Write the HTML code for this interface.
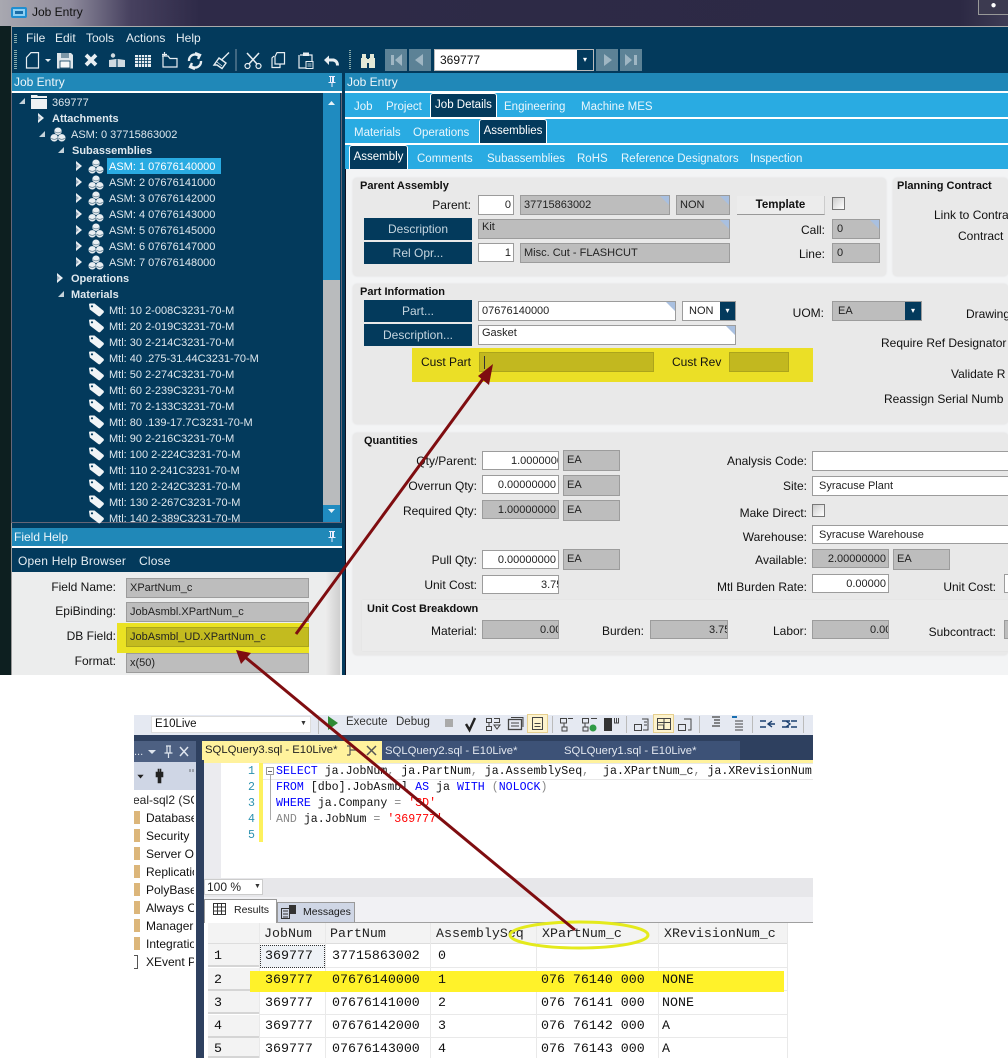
<!DOCTYPE html>
<html><head><meta charset="utf-8"><title>Job Entry</title>
<style>
html,body{margin:0;padding:0;background:#fff}
#p{position:relative;width:1008px;height:1058px;overflow:hidden;background:#fff;font:12px/14px "Liberation Sans",sans-serif;color:#111}
#p div,#p span.a{position:absolute;white-space:nowrap}
.bx{box-sizing:border-box}
.nv{background:#033a5c}
.t{color:#e6eef3}
.tr{font-size:11px;color:#dfe8ee;line-height:14px;margin-top:1px}
.b{font-weight:bold}
.h{background:#2088b8;color:#eef6fa;height:18px;line-height:18px;padding-left:2px;box-sizing:border-box}
.tb{background:#29abe2;height:24px}
.tl{color:#e9f6fc;line-height:14px;font-size:11.5px}
.act{background:#033a5c;border:1px solid #fff;border-bottom:0;border-radius:3px 3px 0 0;box-sizing:border-box;color:#fff;text-align:center;line-height:22px;height:24px;font-size:11.5px}
.g{background:#e9e9e9;border-radius:4px;box-shadow:0 0 2px #ddd}
.gt{font-weight:bold;font-size:11px;color:#111;margin-top:1px}
.f{box-sizing:border-box;height:20px;border:1px solid #9c9c9c;background:#bdbdbd;font-size:11px;line-height:19px;padding:0 3px;overflow:hidden;color:#222}
.w{background:#fff}
.n{text-align:right;padding-right:2px}
.c::after{content:"";position:absolute;right:0;top:0;border-top:9px solid #a9c0e0;border-left:9px solid transparent}
.btn{box-sizing:border-box;width:108px;height:22px;background:#033a5c;color:#c5d5df;text-align:center;line-height:23px;left:364px}
.l{text-align:right;color:#111}
.dd{background:#033a5c;color:#fff;font-size:8px;text-align:center;line-height:18px}
.ck{box-sizing:border-box;width:13px;height:13px;border:1px solid #777;background:linear-gradient(135deg,#ccc,#fff)}
.cd{font:11.6px/16px "Liberation Mono",monospace;color:#111}
.m{font:13.3px/16px "Liberation Mono",monospace;color:#111}
.k{color:#00f}.s{color:#f00}.y{color:#888}
.ln{font:11.6px/16px "Liberation Mono",monospace;color:#2b91af}
.st{font-size:10.5px;color:#1a1a1a;line-height:14px}
.rh{background:#f3f3f3;border-bottom:2px solid #d5d5d5;box-sizing:border-box;left:208px;width:51px;height:23px}
.vl{background:#e9e9e9;width:1px;top:923px;height:135px}
.hl{background:#e9e9e9;height:1px;left:259px;width:528px}
.nb{background:#5c8296;width:22px;height:22px;top:49px}
.q{font-size:11.3px}
svg{position:absolute;overflow:visible}
</style></head><body>
<div id="p">
<svg width="0" height="0"><defs>
<symbol id="asm" viewBox="0 0 16 16"><g fill="#e8eef2" stroke="#033a5c" stroke-width=".5"><circle cx="8" cy="4.500" r="4.200"/><circle cx="4" cy="11.500" r="4.200"/><circle cx="12" cy="11.500" r="4.200"/></g><g fill="none" stroke="#6f8a9b" stroke-width=".9"><path d="M4.500 5Q8 7.500 11.500 5M.8 12Q4 14.500 7.200 12M8.800 12Q12 14.500 15.200 12"/></g></symbol>
<symbol id="tag" viewBox="0 0 18 14"><path d="M1 1.500Q1 .5 2 .5H6.500L15.500 7.800Q16.300 8.800 15.500 9.800L12.300 13Q11.300 13.800 10.300 13L1.800 6.500Z" fill="#f0f4f6"/><circle cx="4" cy="3.300" r="1.100" fill="#033a5c"/></symbol>
<symbol id="ra" viewBox="0 0 8 10"><path d="M1 0 7 5 1 10Z" fill="#e8eef2"/><path d="M1 2.500V7.500L4 5Z" fill="#9ab"/></symbol>
<symbol id="da" viewBox="0 0 8 8"><path d="M7 1V7H1Z" fill="#c5d2da"/></symbol>
</defs></svg>

<!-- window chrome -->
<div style="left:0;top:0;width:1008px;height:26px;background:linear-gradient(90deg,#a8a8b0 0,#8d8a9c 70px,#47415f 130px,#2e2a48 200px,#2c2944 960px,#3e3c55 1008px)"></div>
<div style="left:0;top:26px;width:11px;height:649px;background:#0d1f20"></div>
<svg style="left:11px;top:7px" width="16" height="11"><rect width="16" height="11" rx="2" fill="#1f8ed0"/><rect x="2" y="2" width="12" height="7" fill="#8fd0f2"/><rect x="4" y="4" width="8" height="3" fill="#1a6ea8"/></svg>
<div style="left:32px;top:5px;color:#111;font-size:12px">Job Entry</div>
<div style="left:978px;top:0;width:30px;height:15px;background:#3c3a50;border-left:1px solid #999;border-bottom:1px solid #999;box-sizing:border-box;color:#fff;font-size:10px;text-align:center;line-height:12px">&#9679;</div>

<!-- main frame -->
<div class="nv" style="left:11px;top:26px;width:997px;height:649px;border-top:1px solid #aaa;border-left:1px solid #999;box-sizing:border-box"></div>
<div class="t" style="left:26px;top:31px">File</div>
<div class="t" style="left:55px;top:31px">Edit</div>
<div class="t" style="left:86px;top:31px">Tools</div>
<div class="t" style="left:126px;top:31px">Actions</div>
<div class="t" style="left:176px;top:31px">Help</div>
<div style="left:14px;top:34px;width:3px;height:10px;background:repeating-linear-gradient(#8aa 0 1px,transparent 1px 2px)"></div>
<div style="left:14px;top:50px;width:3px;height:20px;background:repeating-linear-gradient(#8aa 0 1px,transparent 1px 2px)"></div>

<!-- toolbar icons -->
<svg style="left:25px;top:52px" width="320" height="18" fill="none" stroke="#e8eef2" stroke-width="1.2">
<path d="M6 .6H13.500V16H1.500V5.500Z"/>
<path d="M20 7H26L23 10Z" fill="#e8eef2" stroke="none"/>
<path d="M32 1H46L48 3V16.500H32Z" fill="#dfe6ea" stroke="none"/><path d="M36 1H44V6H36Z" fill="#7d97a7" stroke="none"/><rect x="35" y="9" width="10" height="7" fill="#f4f7f8" stroke="#033a5c" stroke-width=".8"/>
<path d="M61 3 71 13M71 3 61 13" stroke-width="3.8"/>
<path d="M84 8 91 7 92 8 93 7 100 8V15H84Z" fill="#d0dae0" stroke="none"/><circle cx="88" cy="3.500" r="2.200" fill="#d0dae0" stroke="none"/><path d="M92 8V15" stroke="#033a5c"/>
<rect x="110" y="3" width="16" height="12" fill="#e8eef2" stroke="none"/><path d="M110 5.500H126M110 8.500H126M110 11.500H126M113.500 3V15M116.500 3V15M119.500 3V15M122.500 3V15" stroke="#033a5c" stroke-width=".8"/>
<path d="M137 4H143L145 6.500H152V15H138V4M137 2.500H142M139.500 0V4"/>
<path d="M164 9A6 6 0 0 1 174 4M170 1 175 3 173 7M176 9A6 6 0 0 1 166 14M170 17 165 15 167 11" stroke-width="2.4"/>
<path d="M204 .5 197 7.500M194 6 201 11 197 16.500 192 13 189 13Z" stroke-width="1.400"/><path d="M192 10 197 14" stroke-width=".8"/>
<path d="M211 -3V19" stroke="#7d97a7" stroke-width="1"/>
<path d="M222 1 232 12M234 1 224 12" stroke-width="1.5"/><circle cx="222.500" cy="14" r="2.500"/><circle cx="233.500" cy="14" r="2.500"/>
<path d="M252 .6H259.500V12H250V4.500ZM249 4 247 6V15.500H255V12"/>
<path d="M275 3H287V9M281 16H274V3"/><rect x="278" y=".5" width="6" height="3.500" fill="#e8eef2" stroke="none"/><rect x="281" y="9.500" width="7" height="7" stroke-width="1"/><path d="M282.500 12H286.500M282.500 14H286.500" stroke-width=".7"/>
<path d="M299 8 304 3.500V6.500H309Q314 8 314 13.500L311 13.500Q311 10 308 9.500H304V13Z" fill="#e8eef2" stroke="none"/>
</svg>
<div style="left:349px;top:50px;width:2px;height:20px;background:repeating-linear-gradient(#8aa 0 1px,transparent 1px 2px)"></div>
<svg style="left:360px;top:53px" width="16" height="15"><path d="M1 5H7V15H1ZM9 5H15V15H9ZM2 1H6V5H2ZM10 1H14V5H10ZM7 6H9V10H7Z" fill="#e3e8d6"/></svg>
<div class="nb" style="left:385px"></div><div class="nb" style="left:409px"></div><div class="nb" style="left:596px"></div><div class="nb" style="left:620px"></div>
<svg style="left:385px;top:49px" width="260" height="22" fill="#9fb6c3"><path d="M6 6H9V16H6ZM17 5V17L10 11ZM38 5V17L30 11ZM219 5 227 11 219 17ZM240 5 247 11 240 17ZM249 6H252V16H249Z"/></svg>
<div class="bx w" style="left:434px;top:49px;width:160px;height:22px;border:1px solid #bbb;line-height:20px;padding-left:5px;color:#111">369777</div>
<div class="dd" style="left:577px;top:50px;width:16px;height:20px;line-height:20px">&#9662;</div>

<!-- left tree panel -->
<div class="h" style="left:12px;top:73px;width:330px">Job Entry</div>
<div style="left:12px;top:91px;width:330px;height:2px;background:#fff"></div>
<svg style="left:327px;top:76px" width="10" height="12" fill="#eef"><path d="M2 0H8V1H7V6H8.500V7H5.500V11H4.500V7H1.500V6H3V1H2ZM4 1V6H5V1Z"/></svg>
<div style="left:11px;top:93px;width:331px;height:430px;border:1px solid #667;box-sizing:border-box;border-top:0"></div>
<div style="left:323px;top:93px;width:17px;height:187px;background:#1f8bc0"></div>
<div style="left:323px;top:280px;width:17px;height:225px;background:#b9bbbd"></div>
<div style="left:323px;top:505px;width:17px;height:17px;background:#1f8bc0"></div>
<svg style="left:327px;top:99px" width="9" height="420" fill="#e8f2f7"><path d="M1 6 4.500 2 8 6ZM1 410 8 410 4.500 414Z"/></svg>
<svg style="left:18px;top:97px" width="8" height="8"><use href="#da"/></svg>
<svg style="left:31px;top:95px" width="16" height="14" fill="#eef2f4"><path d="M0 0H6L7 1H16V3H0ZM0 4H16V14H0Z"/></svg>
<div class="tr" style="left:52px;top:95px">369777</div>
<svg style="left:37px;top:113px" width="8" height="10"><use href="#ra"/></svg>
<div class="tr b" style="left:52px;top:111px">Attachments</div>
<svg style="left:38px;top:130px" width="8" height="8"><use href="#da"/></svg>
<svg style="left:50px;top:127px" width="16" height="15"><use href="#asm"/></svg>
<div class="tr" style="left:71px;top:127px">ASM: 0 37715863002</div>
<svg style="left:57px;top:146px" width="8" height="8"><use href="#da"/></svg>
<div class="tr b" style="left:72px;top:143px">Subassemblies</div>
<div style="left:107px;top:158px;width:114px;height:16px;background:#29abe2"></div>
<svg style="left:75px;top:161px" width="8" height="10"><use href="#ra"/></svg><svg style="left:88px;top:159px" width="16" height="15"><use href="#asm"/></svg><div class="tr" style="left:109px;top:159px;color:#fff">ASM: 1 07676140000</div>
<svg style="left:75px;top:177px" width="8" height="10"><use href="#ra"/></svg><svg style="left:88px;top:175px" width="16" height="15"><use href="#asm"/></svg><div class="tr" style="left:109px;top:175px">ASM: 2 07676141000</div>
<svg style="left:75px;top:193px" width="8" height="10"><use href="#ra"/></svg><svg style="left:88px;top:191px" width="16" height="15"><use href="#asm"/></svg><div class="tr" style="left:109px;top:191px">ASM: 3 07676142000</div>
<svg style="left:75px;top:209px" width="8" height="10"><use href="#ra"/></svg><svg style="left:88px;top:207px" width="16" height="15"><use href="#asm"/></svg><div class="tr" style="left:109px;top:207px">ASM: 4 07676143000</div>
<svg style="left:75px;top:225px" width="8" height="10"><use href="#ra"/></svg><svg style="left:88px;top:223px" width="16" height="15"><use href="#asm"/></svg><div class="tr" style="left:109px;top:223px">ASM: 5 07676145000</div>
<svg style="left:75px;top:241px" width="8" height="10"><use href="#ra"/></svg><svg style="left:88px;top:239px" width="16" height="15"><use href="#asm"/></svg><div class="tr" style="left:109px;top:239px">ASM: 6 07676147000</div>
<svg style="left:75px;top:257px" width="8" height="10"><use href="#ra"/></svg><svg style="left:88px;top:255px" width="16" height="15"><use href="#asm"/></svg><div class="tr" style="left:109px;top:255px">ASM: 7 07676148000</div>
<svg style="left:56px;top:273px" width="8" height="10"><use href="#ra"/></svg><div class="tr b" style="left:71px;top:271px">Operations</div>
<svg style="left:57px;top:290px" width="8" height="8"><use href="#da"/></svg><div class="tr b" style="left:71px;top:287px">Materials</div>
<svg style="left:88px;top:303px" width="18" height="14"><use href="#tag"/></svg><div class="tr" style="left:109px;top:303px">Mtl: 10 2-008C3231-70-M</div>
<svg style="left:88px;top:319px" width="18" height="14"><use href="#tag"/></svg><div class="tr" style="left:109px;top:319px">Mtl: 20 2-019C3231-70-M</div>
<svg style="left:88px;top:335px" width="18" height="14"><use href="#tag"/></svg><div class="tr" style="left:109px;top:335px">Mtl: 30 2-214C3231-70-M</div>
<svg style="left:88px;top:351px" width="18" height="14"><use href="#tag"/></svg><div class="tr" style="left:109px;top:351px">Mtl: 40 .275-31.44C3231-70-M</div>
<svg style="left:88px;top:367px" width="18" height="14"><use href="#tag"/></svg><div class="tr" style="left:109px;top:367px">Mtl: 50 2-274C3231-70-M</div>
<svg style="left:88px;top:383px" width="18" height="14"><use href="#tag"/></svg><div class="tr" style="left:109px;top:383px">Mtl: 60 2-239C3231-70-M</div>
<svg style="left:88px;top:399px" width="18" height="14"><use href="#tag"/></svg><div class="tr" style="left:109px;top:399px">Mtl: 70 2-133C3231-70-M</div>
<svg style="left:88px;top:415px" width="18" height="14"><use href="#tag"/></svg><div class="tr" style="left:109px;top:415px">Mtl: 80 .139-17.7C3231-70-M</div>
<svg style="left:88px;top:431px" width="18" height="14"><use href="#tag"/></svg><div class="tr" style="left:109px;top:431px">Mtl: 90 2-216C3231-70-M</div>
<svg style="left:88px;top:447px" width="18" height="14"><use href="#tag"/></svg><div class="tr" style="left:109px;top:447px">Mtl: 100 2-224C3231-70-M</div>
<svg style="left:88px;top:463px" width="18" height="14"><use href="#tag"/></svg><div class="tr" style="left:109px;top:463px">Mtl: 110 2-241C3231-70-M</div>
<svg style="left:88px;top:479px" width="18" height="14"><use href="#tag"/></svg><div class="tr" style="left:109px;top:479px">Mtl: 120 2-242C3231-70-M</div>
<svg style="left:88px;top:495px" width="18" height="14"><use href="#tag"/></svg><div class="tr" style="left:109px;top:495px">Mtl: 130 2-267C3231-70-M</div>
<svg style="left:88px;top:510px" width="18" height="14"><use href="#tag"/></svg><div class="tr" style="left:109px;top:511px;height:11px;overflow:hidden">Mtl: 140 2-389C3231-70-M</div>

<!-- field help -->
<div class="h" style="left:12px;top:528px;width:330px">Field Help</div>
<div style="left:12px;top:546px;width:330px;height:2px;background:#fff"></div>
<svg style="left:327px;top:531px" width="10" height="12" fill="#eef"><path d="M2 0H8V1H7V6H8.500V7H5.500V11H4.500V7H1.500V6H3V1H2ZM4 1V6H5V1Z"/></svg>
<div class="t" style="left:18px;top:554px;letter-spacing:.2px">Open Help Browser</div>
<div class="t" style="left:139px;top:554px;letter-spacing:.2px">Close</div>
<div style="left:12px;top:572px;width:330px;height:103px;background:#eceded"></div>
<div style="left:325px;top:572px;width:15px;height:103px;background:linear-gradient(90deg,#eee,#cfcfcf)"></div>
<div class="l" style="left:20px;width:96px;top:580px">Field Name:</div>
<div class="l" style="left:20px;width:96px;top:604px">EpiBinding:</div>
<div class="l" style="left:20px;width:96px;top:629px">DB Field:</div>
<div class="l" style="left:20px;width:96px;top:654px">Format:</div>
<div class="f" style="left:126px;top:578px;width:183px">XPartNum_c</div>
<div class="f" style="left:126px;top:602px;width:183px">JobAsmbl.XPartNum_c</div>
<div style="left:117px;top:623px;width:192px;height:30px;background:#eae223"></div>
<div class="f" style="left:126px;top:627px;width:183px;background:#c3bb1f;border-color:#aaa51c">JobAsmbl_UD.XPartNum_c</div>
<div class="f" style="left:126px;top:653px;width:183px">x(50)</div>

<!-- right panel -->
<div class="h" style="left:345px;top:73px;width:663px">Job Entry</div>
<div style="left:345px;top:91px;width:663px;height:2px;background:#fff"></div>
<div class="tb" style="left:345px;top:93px;width:663px"></div>
<div style="left:345px;top:117px;width:663px;height:2px;background:#fff"></div>
<div class="tb" style="left:345px;top:119px;width:663px"></div>
<div style="left:345px;top:143px;width:663px;height:2px;background:#fff"></div>
<div class="tb" style="left:345px;top:145px;width:663px"></div>
<div class="tl" style="left:354px;top:100px">Job</div>
<div class="tl" style="left:386px;top:100px">Project</div>
<div class="act" style="left:430px;top:93px;width:67px">Job Details</div>
<div class="tl" style="left:504px;top:100px">Engineering</div>
<div class="tl" style="left:581px;top:100px">Machine MES</div>
<div class="tl" style="left:354px;top:126px">Materials</div>
<div class="tl" style="left:413px;top:126px">Operations</div>
<div class="act" style="left:479px;top:119px;width:68px">Assemblies</div>
<div class="act" style="left:349px;top:145px;width:59px">Assembly</div>
<div class="tl" style="left:417px;top:152px">Comments</div>
<div class="tl" style="left:487px;top:152px">Subassemblies</div>
<div class="tl" style="left:577px;top:152px">RoHS</div>
<div class="tl" style="left:621px;top:152px">Reference Designators</div>
<div class="tl" style="left:750px;top:152px">Inspection</div>
<div style="left:345px;top:169px;width:663px;height:506px;background:#f3f4f5;border-left:1px solid #112;box-sizing:border-box"></div>

<!-- Parent assembly -->
<div class="g" style="left:353px;top:178px;width:533px;height:98px"></div>
<div class="g" style="left:893px;top:178px;width:115px;height:98px"></div>
<div class="gt" style="left:360px;top:178px">Parent Assembly</div>
<div class="gt" style="left:897px;top:178px">Planning Contract</div>
<div class="l" style="right:537px;top:198px">Parent:</div>
<div class="f w n" style="left:478px;top:195px;width:36px">0</div>
<div class="f c" style="left:520px;top:195px;width:150px">37715863002</div>
<div class="f c" style="left:676px;top:195px;width:54px">NON</div>
<div class="bx b" style="left:737px;top:196px;width:88px;height:19px;background:#ececec;border-bottom:1px solid #999;border-right:1px solid #ccc;text-align:center;line-height:18px;font-size:11.5px">Template</div>
<div class="ck" style="left:832px;top:197px"></div>
<div class="btn" style="top:218px">Description</div>
<div class="f c" style="left:478px;top:219px;width:252px;line-height:15px">Kit</div>
<div class="l" style="right:183px;top:223px">Call:</div>
<div class="f c" style="left:832px;top:219px;width:48px;padding-left:4px">0</div>
<div class="btn" style="top:242px">Rel Opr...</div>
<div class="f w n" style="left:478px;top:243px;width:36px;height:19px">1</div>
<div class="f" style="left:520px;top:243px;width:210px">Misc. Cut - FLASHCUT</div>
<div class="l" style="right:183px;top:247px">Line:</div>
<div class="f" style="left:832px;top:243px;width:48px;padding-left:4px">0</div>
<div class="l" style="left:934px;top:208px">Link to Contra</div>
<div class="l" style="left:958px;top:229px">Contract</div>

<!-- Part information -->
<div class="g" style="left:353px;top:284px;width:655px;height:140px"></div>
<div class="gt" style="left:360px;top:284px">Part Information</div>
<div class="btn" style="top:300px">Part...</div>
<div class="f w c" style="left:478px;top:301px;width:198px">07676140000</div>
<div class="f w" style="left:682px;top:301px;width:54px">&nbsp;NON</div>
<div class="dd" style="left:720px;top:302px;width:15px;height:18px">&#9662;</div>
<div class="l" style="right:184px;top:306px">UOM:</div>
<div class="f" style="left:832px;top:301px;width:90px;padding-left:5px">EA</div>
<div class="dd" style="left:905px;top:302px;width:16px;height:18px">&#9662;</div>
<div class="btn" style="top:324px">Description...</div>
<div class="f w c" style="left:478px;top:325px;width:258px;line-height:15px">Gasket</div>
<div style="left:966px;top:307px">Drawing</div>
<div style="left:881px;top:336px">Require Ref Designator</div>
<div style="left:951px;top:367px">Validate R</div>
<div style="left:884px;top:392px">Reassign Serial Numb</div>
<div style="left:412px;top:348px;width:401px;height:34px;background:#ebdf26"></div>
<div style="left:421px;top:355px">Cust Part</div>
<div class="f" style="left:479px;top:352px;width:175px;background:#c2b81f;border-color:#aca41c"><span style="position:absolute;left:4px;top:3px;width:1px;height:13px;background:#333"></span></div>
<div style="left:672px;top:355px">Cust Rev</div>
<div class="f" style="left:729px;top:352px;width:60px;background:#c2b81f;border-color:#aca41c"></div>

<!-- Quantities -->
<div class="g" style="left:353px;top:433px;width:655px;height:222px"></div>
<div class="gt" style="left:364px;top:433px">Quantities</div>
<div class="l" style="right:531px;top:454px">Qty/Parent:</div>
<div class="f w" style="left:482px;top:451px;width:77px;height:19px;padding:0 0 0 28px">1.00000000</div>
<div class="f" style="left:563px;top:450px;width:57px;height:21px">EA</div>
<div class="l" style="right:531px;top:479px">Overrun Qty:</div>
<div class="f w n" style="left:482px;top:475px;width:77px;height:19px">0.00000000</div>
<div class="f" style="left:563px;top:475px;width:57px;height:21px">EA</div>
<div class="l" style="right:531px;top:504px">Required Qty:</div>
<div class="f n" style="left:482px;top:500px;width:77px;height:19px">1.00000000</div>
<div class="f" style="left:563px;top:500px;width:57px;height:21px">EA</div>
<div class="l" style="right:531px;top:553px">Pull Qty:</div>
<div class="f w n" style="left:482px;top:550px;width:77px;height:19px">0.00000000</div>
<div class="f" style="left:563px;top:549px;width:57px;height:21px">EA</div>
<div class="l" style="right:531px;top:578px">Unit Cost:</div>
<div class="f w" style="left:482px;top:575px;width:77px;height:19px;padding:0 0 0 58px">3.75</div>
<div class="l" style="right:201px;top:454px">Analysis Code:</div>
<div class="f w" style="left:812px;top:451px;width:210px">&nbsp;</div>
<div class="l" style="right:201px;top:479px">Site:</div>
<div class="f w" style="left:812px;top:476px;width:210px">&nbsp;Syracuse Plant</div>
<div class="l" style="right:201px;top:506px">Make Direct:</div>
<div class="ck" style="left:812px;top:504px"></div>
<div class="l" style="right:201px;top:530px">Warehouse:</div>
<div class="f w" style="left:812px;top:525px;width:210px;height:19px">&nbsp;Syracuse Warehouse</div>
<div class="l" style="right:201px;top:553px">Available:</div>
<div class="f n" style="left:812px;top:549px;width:77px;height:19px">2.00000000</div>
<div class="f" style="left:893px;top:549px;width:57px;height:21px">EA</div>
<div class="l" style="right:201px;top:580px">Mtl Burden Rate:</div>
<div class="f w n" style="left:812px;top:574px;width:77px;height:19px">0.00000</div>
<div class="l" style="right:12px;top:580px">Unit Cost:</div>
<div class="f w" style="left:1004px;top:574px;width:20px;height:19px"></div>
<div style="left:362px;top:600px;width:646px;height:51px;background:#ebebeb;box-shadow:0 0 1px #ddd"></div>
<div class="gt" style="left:367px;top:601px">Unit Cost Breakdown</div>
<div class="l" style="right:531px;top:624px">Material:</div>
<div class="f" style="left:482px;top:620px;width:77px;height:19px;padding:0 0 0 57px">0.00</div>
<div class="l" style="right:364px;top:624px">Burden:</div>
<div class="f" style="left:650px;top:620px;width:78px;height:19px;padding:0 0 0 58px">3.75</div>
<div class="l" style="right:201px;top:624px">Labor:</div>
<div class="f" style="left:812px;top:620px;width:77px;height:19px;padding:0 0 0 57px">0.00</div>
<div class="l" style="right:12px;top:625px">Subcontract:</div>
<div class="f" style="left:1004px;top:620px;width:20px;height:19px"></div>

<!-- white gap -->
<div style="left:0;top:675px;width:1008px;height:383px;background:#fff"></div>

<!-- SSMS toolbar -->
<div style="left:134px;top:715px;width:679px;height:20px;background:#e5e9f2"></div>
<div class="bx w" style="left:151px;top:716px;width:160px;height:17px;border:1px solid #ddd;padding-left:3px;line-height:14px;font-size:11.5px">E10Live</div>
<div style="left:300px;top:719px;color:#333;font-size:7px;line-height:10px">&#9660;</div>
<div style="left:346px;top:715px;font-size:11.5px;color:#333">Execute</div>
<div style="left:396px;top:715px;font-size:11.5px;color:#333">Debug</div>
<svg style="left:0;top:0" width="813" height="735" fill="none" stroke="#444" stroke-width="1">
<path d="M318.500 716V734" stroke="#bbb"/>
<path d="M328 716V730L338 723Z" fill="#2f8a35" stroke="none"/>
<rect x="445" y="719" width="8" height="8" fill="#aaa" stroke="none"/>
<path d="M466 724 469.500 730 475 718" stroke="#222" stroke-width="2.4"/>
<path d="M486.500 718.500H491.500V722.500H486.500ZM486.500 726.500H491.500V730.500H486.500ZM489 722.500V726.500M494 718.500H499.500V722.500H494M494 725 500 725 497 729Z"/>
<rect x="508.500" y="719.500" width="13" height="10" stroke-width="1.300"/><path d="M511 723H519M511 726H519M511 717.500H523V727"/>
<rect x="527.500" y="714.500" width="20" height="18" fill="#fdf3cd" stroke="#e6cf8e"/><rect x="532.500" y="717.500" width="10" height="12"/><path d="M534.500 723.500H540.500M534.500 726.500H540.500"/>
<path d="M552.500 716V733" stroke="#bbb"/>
<path d="M560.500 718.500H566.500V723H560.500ZM562 727H567V731H562ZM564 723V727M568 718.500H573"/>
<path d="M582.500 718.500H588.500V723H582.500ZM583 727H588V731H583ZM585 723V727M591 718.500H597"/><circle cx="593" cy="728" r="3.500" fill="#2f9a45" stroke="none"/>
<rect x="604" y="718" width="8" height="13" fill="#333" stroke="none"/><path d="M614.500 718V723H618.500V718M616.500 718V723"/>
<path d="M626.500 716V733" stroke="#bbb"/>
<rect x="634.500" y="724.500" width="7" height="6"/><path d="M642 719H648V730H643M644 722H647M644 725H647"/>
<rect x="653.500" y="714.500" width="20" height="18" fill="#fdf3cd" stroke="#e6cf8e"/><rect x="657.500" y="718.500" width="13" height="11"/><path d="M657.500 722.500H670.500M664 718.500V729.500" /><rect x="657.500" y="725" width="6" height="4.500" stroke-width=".8"/>
<rect x="678.500" y="724.500" width="7" height="6"/><path d="M684 719H691V730H688"/>
<path d="M699.500 716V733" stroke="#bbb"/>
<path d="M712 717H720M714 720H720M714 723H720M712 726H720" stroke-width="1.200"/>
<path d="M732 717H737" stroke="#1a6fb0" stroke-width="2"/><path d="M735 721H743M735 724H743M735 727H743M735 730H743" stroke-width="1.100"/>
<path d="M752.500 716V733" stroke="#bbb"/>
<path d="M760 721H766M760 727H766M769 724H775M772 721 768 724 772 727" stroke="#1a3f70" stroke-width="1.400"/>
<path d="M782 721H790M791 727H797M782 727H789M786 721 790 724 786 727M791 721H797" stroke="#1a3f70" stroke-width="1.400"/>
<path d="M803.500 716V733" stroke="#bbb"/>
</svg>
<div style="left:134px;top:735px;width:679px;height:25px;background:#2e405f"></div>
<!-- SSMS side pane -->
<div style="left:134px;top:741px;width:62px;height:21px;background:#4d6082"></div>
<div style="left:134px;top:745px;color:#dfe5ee;font-size:11px">...</div>
<svg style="left:134px;top:741px" width="62" height="21" fill="none" stroke="#dfe5ee" stroke-width="1.200"><path d="M14 9H22L18 13Z" fill="#dfe5ee" stroke="none"/><path d="M32 5H37M33 5V12H36V5M30.500 12H38.500M34.500 12V17"/><path d="M46 6 54 15M54 6 46 15" stroke-width="1.500"/></svg>
<div style="left:134px;top:762px;width:62px;height:296px;background:#fff"></div>
<div style="left:134px;top:762px;width:62px;height:28px;background:#cfd6e5"></div>
<svg style="left:136px;top:768px" width="60" height="16" fill="#222"><path d="M2 7H7L4.500 10ZM20 4H22V1H23V4H24V1H25V4H27V9H25V15H22V9H20ZM54 1V4M57 1V4" stroke="#222" stroke-width=".6"/></svg>
<div style="left:196px;top:735px;width:8px;height:323px;background:#2e405f"></div>
<div style="left:134px;top:791px;width:60px;height:180px;overflow:hidden;font-size:12px">
<span class="a" style="left:-1px;top:2px;color:#222">eal-sql2 (SQ</span>
<span class="a" style="left:0;top:20px;width:6px;height:13px;background:#dcb67a"></span><span class="a" style="left:12px;top:20px">Database</span>
<span class="a" style="left:0;top:38px;width:6px;height:13px;background:#dcb67a"></span><span class="a" style="left:12px;top:38px">Security</span>
<span class="a" style="left:0;top:56px;width:6px;height:13px;background:#dcb67a"></span><span class="a" style="left:12px;top:56px">Server Ob</span>
<span class="a" style="left:0;top:74px;width:6px;height:13px;background:#dcb67a"></span><span class="a" style="left:12px;top:74px">Replicatio</span>
<span class="a" style="left:0;top:92px;width:6px;height:13px;background:#dcb67a"></span><span class="a" style="left:12px;top:92px">PolyBase</span>
<span class="a" style="left:0;top:110px;width:6px;height:13px;background:#dcb67a"></span><span class="a" style="left:12px;top:110px">Always O</span>
<span class="a" style="left:0;top:128px;width:6px;height:13px;background:#dcb67a"></span><span class="a" style="left:12px;top:128px">Manager</span>
<span class="a" style="left:0;top:146px;width:6px;height:13px;background:#dcb67a"></span><span class="a" style="left:12px;top:146px">Integratio</span>
<span class="a" style="left:-1px;top:164px;width:3px;height:12px;border:1px solid #555"></span><span class="a" style="left:12px;top:164px">XEvent P</span>
</div>
<!-- Query tabs -->
<div class="q" style="left:202px;top:741px;width:180px;height:19px;background:#fff29d;line-height:19px;padding-left:3px;box-sizing:border-box;color:#222">SQLQuery3.sql - E10Live*</div>
<svg style="left:347px;top:745px" width="32" height="12" fill="none" stroke="#555" stroke-width="1.200"><path d="M3 1V10M3 5H11M0 1H3M0 10H3"/><path d="M20 1 29 10M29 1 20 10" stroke-width="1.500"/></svg>
<div style="left:382px;top:741px;width:358px;height:19px;background:#3d5277"></div>
<div class="q" style="left:385px;top:744px;color:#e3e8f0">SQLQuery2.sql - E10Live*</div>
<div class="q" style="left:564px;top:744px;color:#e3e8f0">SQLQuery1.sql - E10Live*</div>
<div style="left:204px;top:760px;width:609px;height:3px;background:#fff29d"></div>
<!-- editor -->
<div style="left:204px;top:763px;width:609px;height:115px;background:#fff"></div>
<div style="left:204px;top:763px;width:17px;height:115px;background:#ebebef"></div>
<div style="left:259px;top:763px;width:4px;height:79px;background:#fdf15d"></div>
<div style="left:263px;top:763px;width:550px;height:17px;border-top:1px solid #e8e8e8;border-bottom:1px solid #e8e8e8;box-sizing:border-box"></div>
<div class="ln" style="left:248px;top:764px">1</div>
<div class="ln" style="left:248px;top:780px">2</div>
<div class="ln" style="left:248px;top:796px">3</div>
<div class="ln" style="left:248px;top:812px">4</div>
<div class="ln" style="left:248px;top:828px">5</div>
<div class="bx" style="left:266px;top:767px;width:8px;height:8px;border:1px solid #999"></div>
<div style="left:268px;top:771px;width:4px;height:1px;background:#666"></div>
<div style="left:270px;top:775px;width:1px;height:45px;background:#aaa"></div>
<div class="cd" style="left:276px;top:764px;width:537px;overflow:hidden"><span class="k">SELECT</span> ja.JobNum<span class="y">,</span> ja.PartNum<span class="y">,</span> ja.AssemblySeq<span class="y">,</span>&nbsp; ja.XPartNum_c<span class="y">,</span> ja.XRevisionNum</div>
<div class="cd" style="left:276px;top:780px"><span class="k">FROM</span> [dbo].JobAsmbl <span class="k">AS</span> ja <span class="k">WITH</span> <span class="y">(</span><span class="k">NOLOCK</span><span class="y">)</span></div>
<div class="cd" style="left:276px;top:796px"><span class="k">WHERE</span> ja.Company <span class="y">=</span> <span class="s">'SD'</span></div>
<div class="cd" style="left:276px;top:812px"><span class="y">AND</span> ja.JobNum <span class="y">=</span> <span class="s">'369777'</span></div>
<!-- zoom bar -->
<div style="left:204px;top:878px;width:609px;height:19px;background:#e7e7ea"></div>
<div class="bx w" style="left:204px;top:879px;width:59px;height:16px;border:1px solid #ccc;font-size:12px;line-height:14px;padding-left:2px;color:#222">100 %</div>
<div style="left:254px;top:882px;font-size:7px;color:#333;line-height:10px">&#9660;</div>
<!-- results -->
<div style="left:204px;top:897px;width:609px;height:161px;background:#fff"></div>
<div style="left:204px;top:897px;width:609px;height:25px;background:#f1f1f4"></div>
<div class="bx" style="left:204px;top:899px;width:73px;height:24px;background:#fff;border:1px solid #999;border-bottom:0;z-index:2"></div>
<svg style="left:213px;top:903px;z-index:3" width="14" height="13" fill="none" stroke="#333"><rect x=".5" y=".5" width="12" height="11"/><path d="M.5 4H12.500M.5 8H12.500M4.500 .5V11.500M8.500 .5V11.500"/></svg>
<div class="st" style="left:234px;top:903px;z-index:3">Results</div>
<div class="bx" style="left:277px;top:902px;width:78px;height:20px;background:#cfd6e5;border:1px solid #999;border-bottom:0"></div>
<svg style="left:281px;top:905px" width="16" height="14" fill="none" stroke="#333"><rect x=".5" y="3.500" width="8" height="10"/><rect x="8.500" y=".5" width="6" height="8" fill="#333"/><path d="M2 6H7M2 9H7M2 12H7"/></svg>
<div class="st" style="left:303px;top:905px">Messages</div>
<div style="left:207px;top:922px;width:606px;height:1px;background:#a0a0a0"></div>
<div style="left:208px;top:923px;width:579px;height:21px;background:#f3f3f3;border-bottom:1px solid #ddd;box-sizing:border-box"></div>
<div class="vl" style="left:259px"></div><div class="vl" style="left:325px"></div><div class="vl" style="left:430px"></div><div class="vl" style="left:536px"></div><div class="vl" style="left:658px"></div><div class="vl" style="left:787px"></div>
<div class="hl" style="top:967px"></div><div class="hl" style="top:990px"></div><div class="hl" style="top:1014px"></div><div class="hl" style="top:1037px"></div>
<div class="rh" style="top:944px"></div><div class="rh" style="top:968px"></div><div class="rh" style="top:991px"></div><div class="rh" style="top:1015px"></div><div class="rh" style="top:1038px;height:20px"></div>
<div class="bx" style="left:260px;top:945px;width:65px;height:23px;background:#eef2f6;border:1px dotted #333"></div>
<div style="left:250px;top:971px;width:534px;height:21px;background:#fff22a"></div>
<div class="m" style="left:264px;top:926px;color:#222">JobNum</div><div class="m" style="left:330px;top:926px;color:#222">PartNum</div><div class="m" style="left:436px;top:926px;color:#222">AssemblySeq</div><div class="m" style="left:542px;top:926px;color:#222">XPartNum_c</div><div class="m" style="left:664px;top:926px;color:#222">XRevisionNum_c</div>
<div class="m" style="left:214px;top:948px">1</div><div class="m" style="left:265px;top:948px">369777</div><div class="m" style="left:332px;top:948px">37715863002</div><div class="m" style="left:438px;top:948px">0</div>
<div class="m" style="left:214px;top:972px">2</div><div class="m" style="left:265px;top:972px">369777</div><div class="m" style="left:332px;top:972px">07676140000</div><div class="m" style="left:438px;top:972px">1</div><div class="m" style="left:541px;top:972px">076 76140 000</div><div class="m" style="left:662px;top:972px">NONE</div>
<div class="m" style="left:214px;top:995px">3</div><div class="m" style="left:265px;top:995px">369777</div><div class="m" style="left:332px;top:995px">07676141000</div><div class="m" style="left:438px;top:995px">2</div><div class="m" style="left:541px;top:995px">076 76141 000</div><div class="m" style="left:662px;top:995px">NONE</div>
<div class="m" style="left:214px;top:1018px">4</div><div class="m" style="left:265px;top:1018px">369777</div><div class="m" style="left:332px;top:1018px">07676142000</div><div class="m" style="left:438px;top:1018px">3</div><div class="m" style="left:541px;top:1018px">076 76142 000</div><div class="m" style="left:662px;top:1018px">A</div>
<div class="m" style="left:214px;top:1041px">5</div><div class="m" style="left:265px;top:1041px">369777</div><div class="m" style="left:332px;top:1041px">07676143000</div><div class="m" style="left:438px;top:1041px">4</div><div class="m" style="left:541px;top:1041px">076 76143 000</div><div class="m" style="left:662px;top:1041px">A</div>

<!-- annotations -->
<svg style="left:0;top:0;z-index:9" width="1008" height="1058" fill="none">
<ellipse cx="579" cy="935" rx="69" ry="13" stroke="#e4ea1c" stroke-width="3"/>
<path d="M296 634 485 376" stroke="#7f0d10" stroke-width="3"/>
<path d="M493 364 478 376 489 385Z" fill="#7f0d10"/>
<path d="M575 930 245 657" stroke="#7f0d10" stroke-width="3"/>
<path d="M236 650 251 653 241 664Z" fill="#7f0d10"/>
</svg>
</div>
</body></html>
